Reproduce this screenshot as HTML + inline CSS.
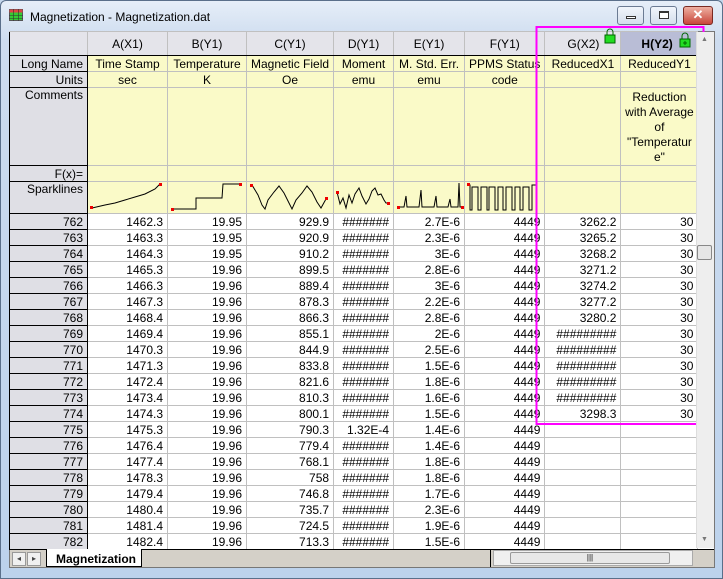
<!DOCTYPE html><html><head><style>
*{margin:0;padding:0;box-sizing:border-box}
body{width:723px;height:579px;overflow:hidden;background:#c4d7ec;font-family:"Liberation Sans",Arial,sans-serif;font-size:12px;position:relative}
#frame{position:absolute;left:0;top:0;width:723px;height:579px;background:linear-gradient(#e6eef8,#cddcef 40px,#bcd2ec);border:1px solid #5a6f8a;border-radius:6px 6px 0 0}
#title{position:absolute;left:30px;top:10px;font-size:12px;color:#000}
.btn{position:absolute;top:6px;height:19px;border:1px solid #6b7b93;border-radius:3px;background:linear-gradient(#f1f5fb,#d4deec)}
#grid{position:absolute;left:9px;top:31px;border-collapse:collapse;table-layout:fixed;background:#fff}
#grid td{border:1px solid #c0c0c0;height:16px;padding:0 4px;white-space:nowrap;overflow:hidden;line-height:14px;text-align:right;color:#000}
#grid td.h{background:#dfdfe5;border-color:#c0c0c0;border-bottom-color:#000;text-align:right;border-left:1px solid #000;border-right:1px solid #000}
#grid tr.hd td{background:#e4e4ea;text-align:center;height:24px;border-bottom:1px solid #000}
#grid tr.y td{background:#fafac8;text-align:center}
#grid tr.y td.h{background:#dfdfe5;text-align:right}
#grid td.hh{background:#b9bdd6!important;font-weight:bold}
#grid td.v{vertical-align:top}
</style></head><body>
<div id="frame"></div>
<svg style="position:absolute;left:9px;top:9px" width="14" height="12"><rect x="0.5" y="0.5" width="13" height="11" fill="#3c3" stroke="#555"/><rect x="0.5" y="0.5" width="13" height="3" fill="#d44"/><path d="M0 6.5H14M0 9.5H14M4.5 0V12M9.5 0V12" stroke="#333" stroke-width="0.6"/></svg>
<div id="title">Magnetization - Magnetization.dat</div>
<div class="btn" style="left:617px;width:27px"><div style="position:absolute;left:8px;top:9px;width:10px;height:3px;border:1px solid #333;background:#fff"></div></div>
<div class="btn" style="left:650px;width:27px"><div style="position:absolute;left:8px;top:4px;width:10px;height:8px;border:1px solid #333;border-top-width:2px;background:#fff"></div></div>
<div class="btn" style="left:683px;width:30px;background:linear-gradient(#eeb0a2,#c8463a);border-color:#7a2a22;color:#fff;font-weight:bold;text-align:center;line-height:16px;font-size:13px">✕</div>
<div style="position:absolute;left:9px;top:31px;width:706px;height:537px;background:#fff;border:1px solid #777"></div>
<table id="grid">
<colgroup><col style="width:78px"><col style="width:80px"><col style="width:79px"><col style="width:87px"><col style="width:60px"><col style="width:71px"><col style="width:79px"><col style="width:76px"><col style="width:77px"></colgroup>
<tr class="hd"><td style="background:#e4e4ea;border-left:1px solid #000"></td><td>A(X1)</td><td>B(Y1)</td><td>C(Y1)</td><td>D(Y1)</td><td>E(Y1)</td><td>F(Y1)</td><td style="text-align:left;padding-left:22px">G(X2)</td><td class="hh" style="text-align:left;padding-left:20px">H(Y2)</td></tr>
<tr class="y"><td class="h">Long Name</td><td>Time Stamp</td><td>Temperature</td><td>Magnetic Field</td><td>Moment</td><td>M. Std. Err.</td><td>PPMS Status</td><td>ReducedX1</td><td>ReducedY1</td></tr>
<tr class="y"><td class="h">Units</td><td>sec</td><td>K</td><td>Oe</td><td>emu</td><td>emu</td><td>code</td><td></td><td></td></tr>
<tr class="y"><td class="h v" style="height:77px">Comments</td><td></td><td></td><td></td><td></td><td></td><td></td><td></td><td class="v" style="white-space:normal;line-height:15px;padding:2px 1px 0">Reduction with Average of "Temperatur e"</td></tr>
<tr class="y"><td class="h">F(x)=</td><td></td><td></td><td></td><td></td><td></td><td></td><td></td><td></td></tr>
<tr class="y"><td class="h v" style="height:32px">Sparklines</td><td></td><td></td><td></td><td></td><td></td><td></td><td></td><td></td></tr>
<tr><td class="h">762</td><td>1462.3</td><td>19.95</td><td>929.9</td><td>#######</td><td>2.7E-6</td><td>4449</td><td>3262.2</td><td>30</td></tr>
<tr><td class="h">763</td><td>1463.3</td><td>19.95</td><td>920.9</td><td>#######</td><td>2.3E-6</td><td>4449</td><td>3265.2</td><td>30</td></tr>
<tr><td class="h">764</td><td>1464.3</td><td>19.95</td><td>910.2</td><td>#######</td><td>3E-6</td><td>4449</td><td>3268.2</td><td>30</td></tr>
<tr><td class="h">765</td><td>1465.3</td><td>19.96</td><td>899.5</td><td>#######</td><td>2.8E-6</td><td>4449</td><td>3271.2</td><td>30</td></tr>
<tr><td class="h">766</td><td>1466.3</td><td>19.96</td><td>889.4</td><td>#######</td><td>3E-6</td><td>4449</td><td>3274.2</td><td>30</td></tr>
<tr><td class="h">767</td><td>1467.3</td><td>19.96</td><td>878.3</td><td>#######</td><td>2.2E-6</td><td>4449</td><td>3277.2</td><td>30</td></tr>
<tr><td class="h">768</td><td>1468.4</td><td>19.96</td><td>866.3</td><td>#######</td><td>2.8E-6</td><td>4449</td><td>3280.2</td><td>30</td></tr>
<tr><td class="h">769</td><td>1469.4</td><td>19.96</td><td>855.1</td><td>#######</td><td>2E-6</td><td>4449</td><td>#########</td><td>30</td></tr>
<tr><td class="h">770</td><td>1470.3</td><td>19.96</td><td>844.9</td><td>#######</td><td>2.5E-6</td><td>4449</td><td>#########</td><td>30</td></tr>
<tr><td class="h">771</td><td>1471.3</td><td>19.96</td><td>833.8</td><td>#######</td><td>1.5E-6</td><td>4449</td><td>#########</td><td>30</td></tr>
<tr><td class="h">772</td><td>1472.4</td><td>19.96</td><td>821.6</td><td>#######</td><td>1.8E-6</td><td>4449</td><td>#########</td><td>30</td></tr>
<tr><td class="h">773</td><td>1473.4</td><td>19.96</td><td>810.3</td><td>#######</td><td>1.6E-6</td><td>4449</td><td>#########</td><td>30</td></tr>
<tr><td class="h">774</td><td>1474.3</td><td>19.96</td><td>800.1</td><td>#######</td><td>1.5E-6</td><td>4449</td><td>3298.3</td><td>30</td></tr>
<tr><td class="h">775</td><td>1475.3</td><td>19.96</td><td>790.3</td><td>1.32E-4</td><td>1.4E-6</td><td>4449</td><td></td><td></td></tr>
<tr><td class="h">776</td><td>1476.4</td><td>19.96</td><td>779.4</td><td>#######</td><td>1.4E-6</td><td>4449</td><td></td><td></td></tr>
<tr><td class="h">777</td><td>1477.4</td><td>19.96</td><td>768.1</td><td>#######</td><td>1.8E-6</td><td>4449</td><td></td><td></td></tr>
<tr><td class="h">778</td><td>1478.3</td><td>19.96</td><td>758</td><td>#######</td><td>1.8E-6</td><td>4449</td><td></td><td></td></tr>
<tr><td class="h">779</td><td>1479.4</td><td>19.96</td><td>746.8</td><td>#######</td><td>1.7E-6</td><td>4449</td><td></td><td></td></tr>
<tr><td class="h">780</td><td>1480.4</td><td>19.96</td><td>735.7</td><td>#######</td><td>2.3E-6</td><td>4449</td><td></td><td></td></tr>
<tr><td class="h">781</td><td>1481.4</td><td>19.96</td><td>724.5</td><td>#######</td><td>1.9E-6</td><td>4449</td><td></td><td></td></tr>
<tr><td class="h">782</td><td>1482.4</td><td>19.96</td><td>713.3</td><td>#######</td><td>1.5E-6</td><td>4449</td><td></td><td></td></tr>
</table>
<svg style="position:absolute;left:0;top:0" width="723" height="579">
<g fill="none" stroke="#000" stroke-width="1">
<polyline points="92,208 105,205 115,203 125,200 135,197 145,194 155,189 160,184"/>
<polyline points="172,209 196,209 196,198 222,198 223,184 240,184"/>
<polyline points="252,185 258,195 262,205 265,209 268,200 274,192 279,186 284,193 289,203 292,209 296,200 302,193 307,186 312,192 317,202 321,208 326,199"/>
<polyline points="337,192 340,204 343,198 346,208 349,195 352,203 355,194 359,188 362,196 366,204 369,199 372,191 375,188 378,195 381,194 384,200 386,203 388,203"/>
<polyline points="398,207 404,207 406,196 407,207 419,207 421,190 422,207 434,207 436,196 437,207 448,207 450,199 451,207 458,207 459,183 460,207 462,207"/>
<polyline points="468,185 470,185 470,210 472,210 472,187 478,187 478,210 481,210 481,187 487,187 487,210 489,210 489,187 495,187 495,210 498,210 498,187 503,187 503,210 506,210 506,187 512,187 512,210 515,210 515,187 520,187 520,210 523,210 523,187 529,187 529,210 532,210 532,185 536,185"/>
</g>
<g fill="#e00"><rect x="90" y="206" width="3" height="3"/><rect x="159" y="183" width="3" height="3"/><rect x="171" y="208" width="3" height="3"/><rect x="239" y="183" width="3" height="3"/><rect x="250" y="184" width="3" height="3"/><rect x="325" y="197" width="3" height="3"/><rect x="336" y="191" width="3" height="3"/><rect x="387" y="202" width="3" height="3"/><rect x="397" y="206" width="3" height="3"/><rect x="461" y="206" width="3" height="3"/><rect x="467" y="183" width="3" height="3"/></g>
<rect x="536.5" y="27" width="167" height="397" fill="none" stroke="#f0f" stroke-width="2"/>
<g><rect x="605" y="35" width="10" height="8" fill="#2d2" stroke="#060"/><path d="M607 35V32a3 3 0 0 1 6 0V35" fill="none" stroke="#060"/><rect x="680" y="39" width="10" height="8" fill="#2d2" stroke="#060"/><path d="M682 39V36a3 3 0 0 1 6 0V39" fill="none" stroke="#060"/><path d="M683 43H687M685 41V45" stroke="#060"/></g>
</svg>
<div style="position:absolute;left:696px;top:32px;width:18px;height:516px;background:#eee;border-left:1px solid #ddd"></div>
<div style="position:absolute;left:697px;top:245px;width:15px;height:15px;background:#e6e6e6;border:1px solid #888;border-radius:2px"></div>
<div style="position:absolute;left:701px;top:36px;font-size:7px;color:#777">▲</div>
<div style="position:absolute;left:701px;top:536px;font-size:7px;color:#777">▼</div>
<div style="position:absolute;left:10px;top:549px;width:704px;height:18px;background:#d4d0c8;border-top:1px solid #000"></div>
<div style="position:absolute;left:12px;top:552px;width:14px;height:14px;background:#f0f0f0;border:1px solid #999;font-size:8px;color:#444;line-height:12px;text-align:center">◂</div>
<div style="position:absolute;left:27px;top:552px;width:14px;height:14px;background:#f0f0f0;border:1px solid #999;font-size:8px;color:#444;line-height:12px;text-align:center">▸</div>
<div style="position:absolute;left:46px;top:549px;width:96px;height:18px;background:#fff;border-left:1px solid #000;border-right:1px solid #000;border-bottom:1px solid #000;font-weight:bold;font-size:12px;padding:3px 0 0 9px">Magnetization</div>
<div style="position:absolute;left:490px;top:550px;width:1px;height:17px;background:#000"></div>
<div style="position:absolute;left:493px;top:550px;width:200px;height:16px;background:#f0f0f0;border:1px solid #aaa"></div>
<div style="position:absolute;left:510px;top:552px;width:160px;height:12px;background:#e8e8e8;border:1px solid #999;border-radius:2px;text-align:center;font-size:8px;line-height:10px">|||</div>
</body></html>
